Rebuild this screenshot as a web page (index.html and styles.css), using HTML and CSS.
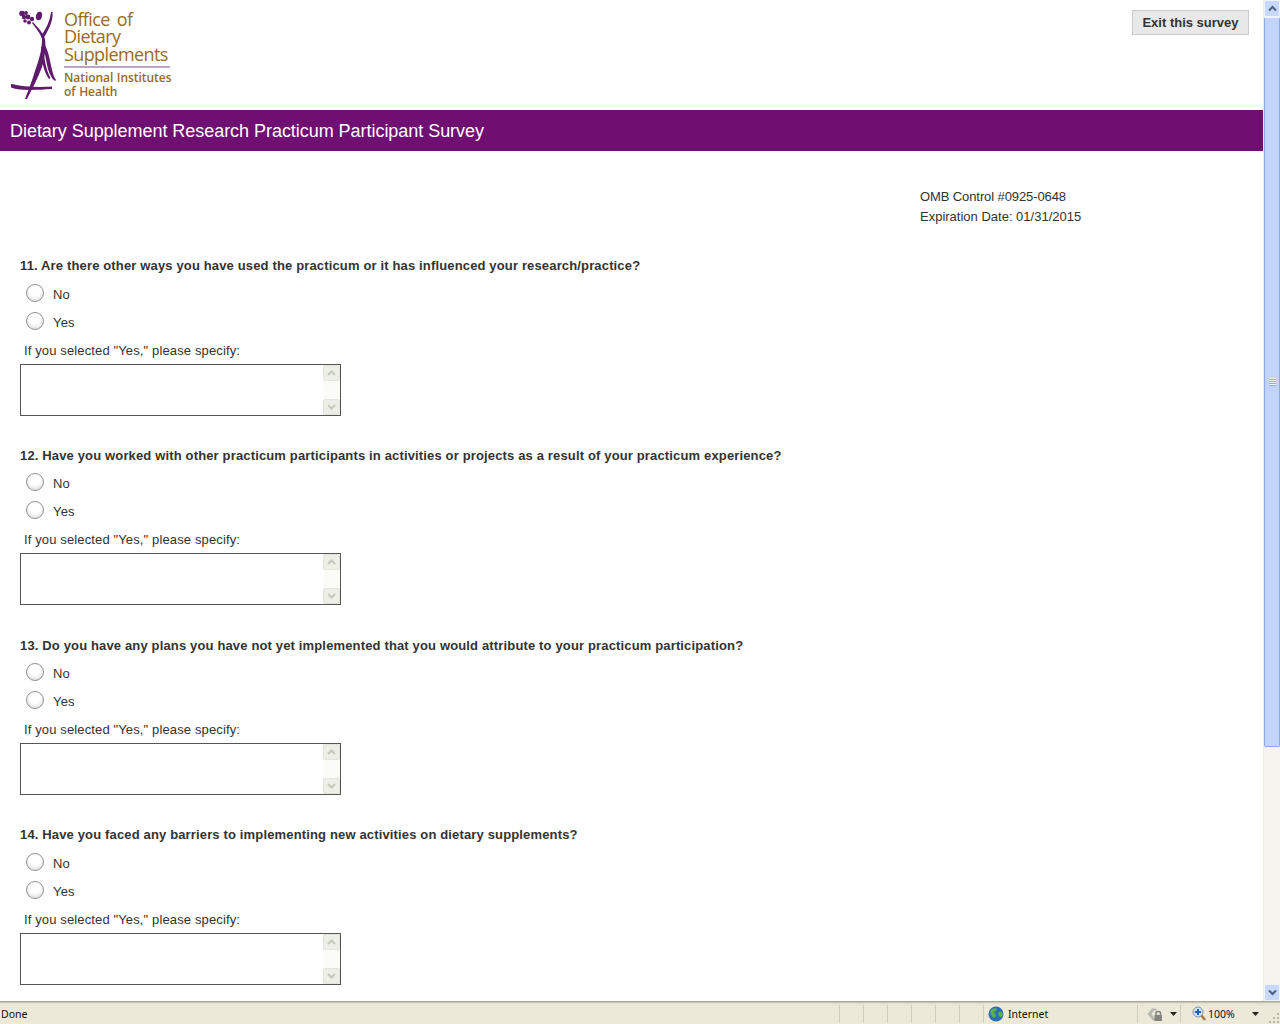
FILE: index.html
```html
<!DOCTYPE html>
<html lang="en">
<head>
<meta charset="utf-8">
<title>Dietary Supplement Research Practicum Participant Survey</title>
<link rel="stylesheet" href="styles.css">
</head>
<body>
<div class="window">
  <div class="viewport">
    <main class="page">
      <header class="masthead">
        <div class="logo">
          <svg class="logo-mark" width="50" height="92" viewBox="11 10 50 92" aria-hidden="true">
            <g fill="#5e1a6b">
              <circle cx="22" cy="14.500" r="2.800"/><circle cx="26" cy="14" r="1.900"/><circle cx="24" cy="18" r="2.200"/>
              <circle cx="28" cy="18" r="2.400"/><circle cx="32" cy="20" r="2.200"/><circle cx="25" cy="22" r="1.800"/><circle cx="29" cy="23.500" r="2"/>
              <ellipse cx="39" cy="17" rx="3" ry="4.300" transform="rotate(15 39 17)"/>
              <path d="M32 24C36 30 40 33 42 40C42 52 39 60 35 72C32 82 28 92 25 100L27 100C32 90 38 79 42 68C45 58 46 48 45 40C43 33 38 29 33 23Z"/>
              <path d="M51 13L52.500 13C53.500 22 48 32 43 40L41 37C46 30 50 22 51 13Z"/>
              <path d="M43 46C45 54 46 62 48 70C50 76 52 80 55 82L56 81C53 77 52 70 50 62C49 56 47 50 45 46Z"/>
              <path d="M41 48C41 58 43 72 49 80L50.500 79C46 71 44 58 43 48Z"/>
              <path d="M11 85C18 86 25 89 52 87.500L52 90C36 91 20 92 11 88.500Z"/>
            </g>
          </svg>
          <div class="logo-text">
            <div class="logo-title">Office of<br>Dietary<br>Supplements</div>
            <div class="logo-sub">National Institutes<br>of Health</div>
          </div>
        </div>
        <button class="exit" type="button">Exit this survey</button>
      </header>
      <h1 class="banner">Dietary Supplement Research Practicum Participant Survey</h1>
      <div class="omb">
        <div class="omb-control">OMB Control #0925-0648</div>
        <div>Expiration Date: 01/31/2015</div>
      </div>
      <form class="survey">
        <section class="question">
          <p class="q-title">11. Are there other ways you have used the practicum or it has influenced your research/practice?</p>
          <label class="option"><input class="radio" type="radio" name="q11"><span>No</span></label>
          <label class="option"><input class="radio" type="radio" name="q11"><span>Yes</span></label>
          <p class="specify">If you selected "Yes," please specify:</p>
          <div class="box"><textarea class="area"></textarea><div class="mini-bar"><span class="mini-btn"><svg width="9" height="6" viewBox="0 0 9 6"><path d="M1 5L4.500 1.500L8 5" fill="none" stroke="#c4c9bd" stroke-width="2"/></svg></span><span class="mini-btn"><svg width="9" height="6" viewBox="0 0 9 6"><path d="M1 1L4.500 4.500L8 1" fill="none" stroke="#c4c9bd" stroke-width="2"/></svg></span></div></div>
        </section>
        <section class="question">
          <p class="q-title">12. Have you worked with other practicum participants in activities or projects as a result of your practicum experience?</p>
          <label class="option"><input class="radio" type="radio" name="q12"><span>No</span></label>
          <label class="option"><input class="radio" type="radio" name="q12"><span>Yes</span></label>
          <p class="specify">If you selected "Yes," please specify:</p>
          <div class="box"><textarea class="area"></textarea><div class="mini-bar"><span class="mini-btn"><svg width="9" height="6" viewBox="0 0 9 6"><path d="M1 5L4.500 1.500L8 5" fill="none" stroke="#c4c9bd" stroke-width="2"/></svg></span><span class="mini-btn"><svg width="9" height="6" viewBox="0 0 9 6"><path d="M1 1L4.500 4.500L8 1" fill="none" stroke="#c4c9bd" stroke-width="2"/></svg></span></div></div>
        </section>
        <section class="question">
          <p class="q-title">13. Do you have any plans you have not yet implemented that you would attribute to your practicum participation?</p>
          <label class="option"><input class="radio" type="radio" name="q13"><span>No</span></label>
          <label class="option"><input class="radio" type="radio" name="q13"><span>Yes</span></label>
          <p class="specify">If you selected "Yes," please specify:</p>
          <div class="box"><textarea class="area"></textarea><div class="mini-bar"><span class="mini-btn"><svg width="9" height="6" viewBox="0 0 9 6"><path d="M1 5L4.500 1.500L8 5" fill="none" stroke="#c4c9bd" stroke-width="2"/></svg></span><span class="mini-btn"><svg width="9" height="6" viewBox="0 0 9 6"><path d="M1 1L4.500 4.500L8 1" fill="none" stroke="#c4c9bd" stroke-width="2"/></svg></span></div></div>
        </section>
        <section class="question">
          <p class="q-title">14. Have you faced any barriers to implementing new activities on dietary supplements?</p>
          <label class="option"><input class="radio" type="radio" name="q14"><span>No</span></label>
          <label class="option"><input class="radio" type="radio" name="q14"><span>Yes</span></label>
          <p class="specify">If you selected "Yes," please specify:</p>
          <div class="box"><textarea class="area"></textarea><div class="mini-bar"><span class="mini-btn"><svg width="9" height="6" viewBox="0 0 9 6"><path d="M1 5L4.500 1.500L8 5" fill="none" stroke="#c4c9bd" stroke-width="2"/></svg></span><span class="mini-btn"><svg width="9" height="6" viewBox="0 0 9 6"><path d="M1 1L4.500 4.500L8 1" fill="none" stroke="#c4c9bd" stroke-width="2"/></svg></span></div></div>
        </section>
      </form>
    </main>
    <aside class="scrollbar" aria-hidden="true">
      <span class="sb-btn"><svg width="9" height="7" viewBox="0 0 9 7"><path d="M1 5.500L4.500 2L8 5.500" fill="none" stroke="#4d6185" stroke-width="2"/></svg></span>
      <span class="sb-thumb"><span class="grip"></span></span>
      <span class="sb-track"></span>
      <span class="sb-btn"><svg width="9" height="7" viewBox="0 0 9 7"><path d="M1 1.500L4.500 5L8 1.500" fill="none" stroke="#4d6185" stroke-width="2"/></svg></span>
    </aside>
  </div>
  <footer class="status">
    <div class="st-main">Done</div>
    <div class="st-cell"></div><div class="st-cell"></div><div class="st-cell"></div><div class="st-cell"></div><div class="st-cell"></div><div class="st-cell"></div>
    <div class="st-zone">
      <svg width="16" height="16" viewBox="0 0 16 16" aria-hidden="true"><circle cx="8" cy="8" r="7.500" fill="#2a6fb5"/><path d="M3 4C5 2 8 2 9 3C9 5 7 5 6 6C6 8 8 8 8 10C7 12 5 12 4 10C2 8 2 6 3 4ZM11 6C13 5 15 7 15 9C14 11 12 12 11 10C10 8 10 7 11 6Z" fill="#5cb04a"/></svg>
      <span>Internet</span>
    </div>
    <div class="st-sec">
      <svg width="16" height="16" viewBox="0 0 16 16" aria-hidden="true"><path d="M0.500 8L5 2.500H9L10.500 4.500H7L4.500 8L8 12.500V15L5.500 14Z" fill="#b9b9b2"/><rect x="7.500" y="9" width="7.500" height="6" fill="#85857f"/><path d="M9 9V7C9 5 13.500 5 13.500 7V9" fill="none" stroke="#85857f" stroke-width="1.500"/></svg>
      <svg class="caret" width="7" height="4" viewBox="0 0 7 4" aria-hidden="true"><path d="M0 0H7L3.500 4Z" fill="#222"/></svg>
    </div>
    <div class="st-zoom">
      <svg width="14" height="15" viewBox="0 0 14 15" aria-hidden="true"><circle cx="6" cy="6" r="5" fill="#cfe2f6" stroke="#7f96ad"/><path d="M3 6H9M6 3V9" stroke="#1f5fc4" stroke-width="2"/><path d="M9.500 9.500L13 14" stroke="#a9793a" stroke-width="2.500"/></svg>
      <span>100%</span>
      <svg class="caret-zoom" width="7" height="4" viewBox="0 0 7 4" aria-hidden="true"><path d="M0 0H7L3.500 4Z" fill="#222"/></svg>
    </div>
    <div class="st-grip"><svg width="12" height="12" viewBox="0 0 12 12" aria-hidden="true"><path d="M9 1h2v2H9zM5 5h2v2H5zM9 5h2v2H9zM1 9h2v2H1zM5 9h2v2H5zM9 9h2v2H9z" fill="#b8b5a3"/></svg></div>
  </footer>
</div>
</body>
</html>
```

FILE: styles.css
```css
* { box-sizing: border-box; }
html, body { margin: 0; padding: 0; height: 100%; overflow: hidden; background: #fff; }
body { font-family: "Liberation Sans", Arial, sans-serif; color: #333; font-size: 13px; }
.window { width: 1280px; height: 1024px; display: flex; flex-direction: column; overflow: hidden; }
.viewport { height: 1001px; display: flex; }
.page { width: 1263px; overflow: hidden; }
.masthead { height: 110px; display: flex; justify-content: space-between; align-items: flex-start; padding: 10px 14px 0 11px; }
.logo { display: flex; gap: 3px; }
.logo-mark { display: block; margin-top: -1px; }
.logo-text { font-family: "Open Sans", sans-serif; color: #9a6a1c; margin-top: -1px; }
.logo-title { font-size: 18px; line-height: 17.250px; letter-spacing: -0.6px; word-spacing: 3px; width: 106px; padding-top: 2px; padding-bottom: 2.750px; border-bottom: 2px solid #bca3c9; }
.logo-sub { font-size: 12px; line-height: 14px; font-weight: 600; letter-spacing: -0.05px; word-spacing: 0.5px; margin-top: 3.500px; white-space: nowrap; }
.exit { width: 117px; height: 25px; padding: 0; background: #e8e8e8; border: 1px solid #ccc; color: #333; font: bold 13px "Liberation Sans", Arial, sans-serif; }
.banner { margin: 0; height: 41px; padding-left: 10px; background: #6f0f71; color: #fff; font-size: 18px; font-weight: 400; line-height: 42px; letter-spacing: -0.04px; }
.omb { margin: 35px 0 0 920px; padding-top: 1px; height: 40px; line-height: 20px; white-space: nowrap; }
.omb-control { letter-spacing: -0.1px; }
.survey { margin-top: 29.200px; padding-left: 20px; }
.question { height: 189.670px; }
.q-title { margin: 0; height: 24px; line-height: 22px; font-weight: 700; letter-spacing: 0.15px; white-space: nowrap; }
.option { display: flex; align-items: center; height: 28px; padding-left: 6px; }
.option span { margin-left: 9px; padding-top: 2px; letter-spacing: 0.2px; }
.radio { appearance: none; width: 18px; height: 18px; margin: 0 0 1px; border: 1px solid #8f9296; border-radius: 50%; background: radial-gradient(circle at 50% 35%, #fff 40%, #d4d4d0 100%); }
.specify { margin: 4.400px 0 0; padding-left: 4px; height: 24px; line-height: 22px; letter-spacing: 0.13px; }
.box { width: 321px; height: 52px; display: flex; border: 1px solid #555; background: #fff; }
.area { flex: 1; border: 0; padding: 0; margin: 0; resize: none; overflow: hidden; outline: 0; background: #fff; }
.mini-bar { width: 17px; display: flex; flex-direction: column; justify-content: space-between; background: #fbfbf7; }
.mini-btn { height: 16px; display: flex; align-items: center; justify-content: center; background: #eeeee8; border: 1px solid #e4e4da; border-radius: 2px; }
.scrollbar { width: 17px; display: flex; flex-direction: column; background: #f6f4ee; border-left: 1px solid #efebe2; }
.sb-btn { height: 17px; display: flex; align-items: center; justify-content: center; background: #c9d9fb; border: 1px solid #eef3fe; border-radius: 2px; flex: none; }
.sb-thumb { height: 730px; display: flex; align-items: center; justify-content: center; background: #c3d4fc; border: 1px solid #8eaaea; border-top-color: #eef3fe; border-radius: 2px; flex: none; }
.grip { width: 7px; height: 8px; background: repeating-linear-gradient(#eef3fe 0 1px, #8eaaea 1px 2px); }
.sb-track { flex: 1; }
.status { height: 23px; display: flex; align-items: center; background: linear-gradient(#aca899 0, #aca899 1px, #e4e1d0 2px, #ece9d8 5px, #ece9d8 100%); font-family: "Noto Sans", sans-serif; font-size: 10.500px; color: #111; padding-top: 2px; }
.st-main { width: 839px; padding-left: 1px; }
.st-cell { width: 24px; height: 18px; border-left: 1px solid #d0cdbd; }
.st-zone { width: 154px; height: 18px; display: flex; align-items: center; gap: 4px; padding-left: 4px; border-left: 1px solid #d0cdbd; }
.st-sec { width: 43px; height: 18px; display: flex; align-items: center; padding-left: 9px; border-left: 1px solid #d0cdbd; }
.caret { margin-left: 7px; }
.st-zoom { width: 88px; height: 18px; display: flex; align-items: center; gap: 2px; padding-left: 11px; border-left: 1px solid #d0cdbd; }
.caret-zoom { margin-left: 15px; }
.st-grip { flex: 1; align-self: flex-end; display: flex; justify-content: flex-end; }
```
